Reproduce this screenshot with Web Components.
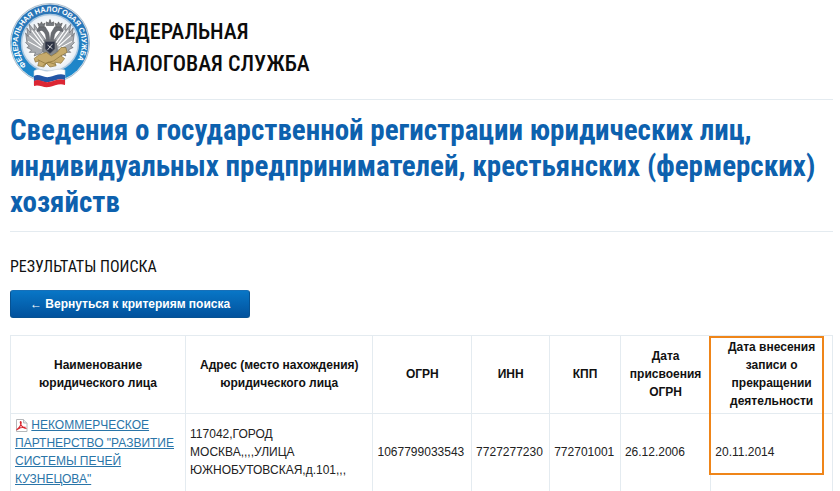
<!DOCTYPE html>
<html lang="ru">
<head>
<meta charset="utf-8">
<meta name="viewport" content="width=device-width, initial-scale=1">
<title>Федеральная налоговая служба</title>
<style>
  html { background: #fff; }
  body {
    margin: 0;
    color: #222;
    font-family: "Liberation Sans", Arial, sans-serif;
    font-size: 12px;
    line-height: 18px;
    --line: #e4ebf0;
    --narrow: "Roboto Condensed", "Liberation Sans Narrow", "Open Sans Condensed", "DejaVu Sans Condensed", sans-serif;
  }
</style>
</head>
<body>
<registry-page>
  <site-header slot="header">
    <tax-emblem slot="logo"></tax-emblem>
    <span>Федеральная<br>налоговая служба</span>
  </site-header>
  <page-title slot="title">Сведения о государственной регистрации юридических лиц, индивидуальных предпринимателей, крестьянских (фермерских) хозяйств</page-title>
  <section-title>Результаты поиска</section-title>
  <back-button>← Вернуться к критериям поиска</back-button>
  <results-table></results-table>
</registry-page>

<script>
function define(name, html) {
  const template = document.createElement('template');
  template.innerHTML = html;
  customElements.define(name, class extends HTMLElement {
    constructor() {
      super();
      this.attachShadow({ mode: 'open' }).append(template.content.cloneNode(true));
    }
  });
}

define('registry-page', `
  <style>
    :host { display: block; padding: 2px 7px 0 10px; }
    main { display: flex; flex-direction: column; align-items: flex-start; padding-top: 22px; }
  </style>
  <slot name="header"></slot>
  <slot name="title"></slot>
  <main><slot></slot></main>
`);

define('site-header', `
  <style>
    :host { display: flex; align-items: flex-start; gap: 19px; padding-bottom: 11px; border-bottom: 1px solid var(--line); }
    .name { padding-top: 14px; color: #0c0c0c; font: 500 22px/32px var(--narrow); text-transform: uppercase; }
  </style>
  <slot name="logo"></slot>
  <div class="name"><slot></slot></div>
`);

define('tax-emblem', `
  <style>
    :host { display: block; flex: none; width: 80px; height: 86px; }
    svg { display: block; }
  </style>
  <svg width="80" height="86" viewBox="0 0 80 86" role="img" aria-label="Эмблема ФНС России">
    <defs>
      <linearGradient id="ring" x1="0" y1="0" x2="0" y2="1"><stop offset="0" stop-color="#2b72b4"/><stop offset="1" stop-color="#1b8bce"/></linearGradient>
      <radialGradient id="disc"><stop offset="0.7" stop-color="#fff"/><stop offset="1" stop-color="#e3ebf3"/></radialGradient>
      <path id="arc" d="M16.500 63.500A32 32 0 1 1 66 60"/>
    </defs>
    <circle cx="40" cy="41" r="39.500" fill="#dfe7ee" stroke="#aebfce" stroke-width="1"/>
    <circle cx="40" cy="41" r="38.500" fill="url(#ring)"/>
    <circle cx="40" cy="41" r="28.500" fill="url(#disc)" stroke="#a9c6df" stroke-width="1.500"/>
    <text fill="#fff" font-family="Liberation Sans, Arial, sans-serif" font-size="7.400" font-weight="700"><textPath href="#arc">ФЕДЕРАЛЬНАЯ НАЛОГОВАЯ СЛУЖБА</textPath></text>
    <g transform="translate(40 40) scale(1.220) translate(-40 -38.500)">
      <g fill="#85898e" stroke="#5c6066" stroke-width=".5">
        <path d="M38 39C34 34 31 29 27 24l0 5-4-5 1 7-3-4 1 7-2-3 1 7-1 1 3 3-2 1 4 2-2 2 5 0-1 3 5-2 3-2z" fill="#a9acb0"/>
        <path d="M42 39C46 34 49 29 53 24l0 5 4-5-1 7 3-4-1 7 2-3-1 7 1 1-3 3 2 1-4 2 2 2-5 0 1 3-5-2-3-2z" fill="#a9acb0"/>
        <path d="M37 39C37 33 36 30 33 29l-4 1 2-4 5 0 3 5 1 7zM43 39C43 33 44 30 47 29l4 1-2-4-5 0-3 5-1 7z" fill="#6a6d72"/>
        <path d="M35 37h10l1 9-6 8-6-8z"/>
        <path d="M36 38h8v6l-4 4-4-4z" fill="#2d3344"/>
      </g>
      <g fill="none" stroke="#fff" stroke-width=".9">
        <path d="M25 29l9 12M23 33l10 9M22 38l11 6M28 29l7 10M55 29l-9 12M57 33l-10 9M58 38l-11 6M52 29l-7 10"/>
        <path d="M38 41l4 3M42 40l-4 5" stroke-width=".6"/>
      </g>
      <g fill="#c7ab6c" stroke="#80692f" stroke-width=".5">
        <path d="M37 25l0-3 2 1 1-3 1 3 2-1 0 3z" fill="#777b80" stroke="#555"/>
        <path d="M31 26l-1-3 2 1 1-2 1 2 2-1-1 3zM45 26l-1-3 2 1 1-2 1 2 2-1-1 3z" fill="#777b80" stroke="#555"/>
        <path d="M31 49l-4 3 1 3 3-1-1 4 5 1 2-3 3 3 5-1-1-3 5 1 3-4-3-2 5-3-1-4-4 0-3 4-5 3-4-3z"/>
        <path d="M30 53l6 3 7-2 7-5M34 58l5-3 6 2" fill="none"/>
      </g>
    </g>
    <path d="M24 69c5-4 9 1 15 0s10-3 16-1v14c-6-2-10 1-16 2s-10-3-15-1z" fill="#fff" stroke="#c7d0d8" stroke-width=".6"/>
    <path d="M24 74c5-3 9 2 15 1s10-4 16-2v5c-6-2-10 1-16 2s-10-3-15-1z" fill="#2356a5"/>
    <path d="M24 79c5-3 9 2 15 1s10-4 16-2v5c-6-2-10 1-16 2s-10-3-15-1z" fill="#dc2633"/>
  </svg>
`);

define('page-title', `
  <style>
    :host { display: block; padding: 12px 0 11px; border-bottom: 1px solid var(--line); }
    h1 { margin: 0; color: #0d61ae; font: 700 29px/36px var(--narrow); }
  </style>
  <h1><slot></slot></h1>
`);

define('section-title', `
  <style>
    :host { display: block; }
    h2 { margin: 0; color: #111; font: 16px/26px var(--narrow); text-transform: uppercase; }
  </style>
  <h2><slot></slot></h2>
`);

define('back-button', `
  <style>
    :host { display: block; margin: 10px 0 17px; }
    button {
      display: block; padding: 3px 19px; border: 1px solid #075292; border-top-color: #1770b8; border-radius: 3px;
      background: linear-gradient(#0876c6, #02529d); color: #fff;
      font: 700 12px/20px "Liberation Sans", Arial, sans-serif; cursor: pointer;
    }
  </style>
  <button type="button"><slot></slot></button>
`);

define('pdf-icon', `
  <style>
    :host { display: inline-block; width: 13px; height: 13px; vertical-align: -3px; }
    svg { display: block; }
  </style>
  <svg width="13" height="13" viewBox="0 0 13 13" aria-hidden="true">
    <path d="M1.500.5h7l3.500 3.500v8.500H1.500z" fill="#fff" stroke="#b5b8ba"/>
    <path d="M8.500.5V4H12" fill="#e6e8e9" stroke="#b5b8ba"/>
    <path d="M1.500 11C4.500 8.500 6.200 6 6.200 3.500c0-1.500-1.200-1-.9.300C5.900 6.500 8 9 11.500 9.500M2 10.500C4.500 8.700 7.500 8 10.500 8.300" fill="none" stroke="#d8252e" stroke-width="1.100"/>
  </svg>
`);

define('results-table', `
  <style>
    :host { display: block; position: relative; align-self: stretch; }
    table { width: 100%; table-layout: fixed; border-collapse: collapse; }
    th, td { padding: 2px 4px 3px; border: 1px solid var(--line); vertical-align: middle; white-space: nowrap; }
    th { color: #111; font-weight: 700; text-align: center; }
    td { text-align: left; }
    a { color: #2a75a8; text-decoration: underline; }
    .name { width: 21.300%; } .address { width: 22.800%; } .ogrn { width: 12%; } .inn { width: 9.500%; }
    .kpp { width: 8.600%; } .assigned { width: 11%; }
    .mark { position: absolute; top: 1px; right: 9px; width: 14%; height: 139px; box-sizing: border-box; border: 2px solid #ef8519; pointer-events: none; }
  </style>
  <table>
    <colgroup><col class="name"><col class="address"><col class="ogrn"><col class="inn"><col class="kpp"><col class="assigned"><col></colgroup>
    <thead>
      <tr>
        <th scope="col">Наименование<br>юридического лица</th>
        <th scope="col">Адрес (место нахождения)<br>юридического лица</th>
        <th scope="col">ОГРН</th>
        <th scope="col">ИНН</th>
        <th scope="col">КПП</th>
        <th scope="col">Дата<br>присвоения<br>ОГРН</th>
        <th scope="col">Дата внесения<br>записи о<br>прекращении<br>деятельности</th>
      </tr>
    </thead>
    <tbody>
      <tr>
        <td><pdf-icon></pdf-icon> <a href="#extract">НЕКОММЕРЧЕСКОЕ<br>ПАРТНЕРСТВО "РАЗВИТИЕ<br>СИСТЕМЫ ПЕЧЕЙ<br>КУЗНЕЦОВА"</a></td>
        <td>117042,ГОРОД<br>МОСКВА,,,,УЛИЦА<br>ЮЖНОБУТОВСКАЯ,д.101,,,</td>
        <td>1067799033543</td>
        <td>7727277230</td>
        <td>772701001</td>
        <td>26.12.2006</td>
        <td>20.11.2014</td>
      </tr>
    </tbody>
  </table>
  <div class="mark"></div>
`);
</script>
</body>
</html>
